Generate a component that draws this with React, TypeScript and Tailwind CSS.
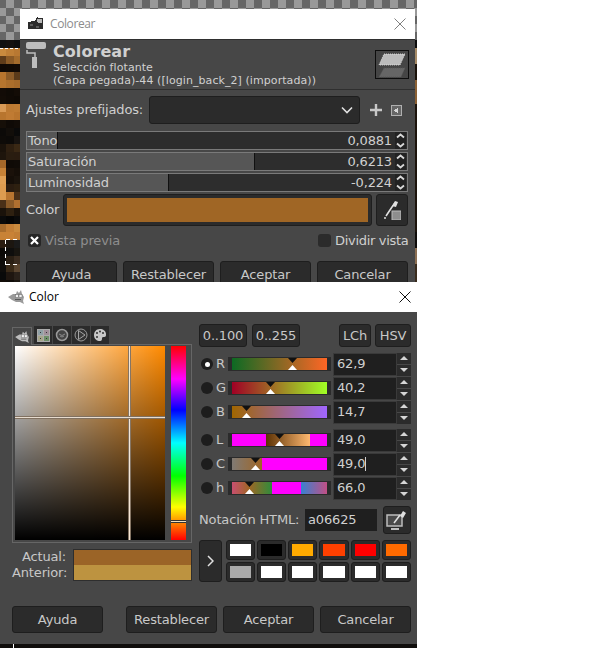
import React from "react";

const DARK = "bg-[#2b2b2b] border border-[#1e1e1e] rounded-[3px]";

// background picture, one row of 3 big pixels per 8px
const PIXELS: string[][] = [
	["#111111", "#151210", "#0f0f0f"],
	["#c98a3e", "#bf7f36", "#b87832"],
	["#5f3c1a", "#8b5a26", "#a56c2c"],
	["#0f0804", "#100904", "#120a05"],
	["#b8752e", "#8d5c28", "#5a3a1a"],
	["#b5752e", "#ab6e2b", "#a56a2a"],
	["#120b06", "#0f0a05", "#130c06"],
	["#130c06", "#100a05", "#0e0904"],
	["#d99a55", "#bd7a32", "#bf7c33"],
	["#b8752e", "#c07b33", "#b9752e"],
	["#160f08", "#0f0a06", "#120c07"],
	["#0c0a08", "#120e0a", "#0a0a0a"],
	["#0e0b08", "#0c0a08", "#171310"],
	["#1a120a", "#2e1f10", "#3a2814"],
	["#1e150c", "#2a1d10", "#2a1c10"],
	["#a5682a", "#0f0a06", "#100b07"],
	["#c78237", "#1a110a", "#150e08"],
	["#e0a055", "#150e08", "#1a130c"],
	["#dd9c50", "#2a1c10", "#2e2010"],
	["#dd9c50", "#b87530", "#4a3018"],
	["#4a3018", "#8a5a28", "#b07030"],
	["#1a120a", "#2e2010", "#1a120a"],
	["#0a0a0a", "#050505", "#0a0a0a"],
	["#a86c2c", "#c27e35", "#c98a3e"],
	["#c88236", "#c98236", "#c27e35"],
	["#2a1c10", "#1c1610", "#1a1a1a"],
	["#0c0a08", "#0f0e0d", "#181510"],
	["#0f0d0b", "#2a1f14", "#3a2c20"],
	["#0f0d0b", "#3a2a18", "#5a4530"],
	["#0a0a0a", "#1f1610", "#2a211a"],
	["#120d08", "#0f0c08", "#1a1510"],
];

const SIDE: [number, number, string][] = [
	[40, 8, "#0c0c0c"],
	[48, 16, "#a58a66"],
	[64, 16, "#1a120a"],
	[80, 24, "#8a6034"],
	[104, 128, "#1c140c"],
	[232, 16, "#0e0c0a"],
	[248, 16, "#8a6e52"],
	[264, 18, "#3a2c1e"],
];

function Backdrop() {
	const checks = [];
	for (let r = 0; r < 5; r++) {
		for (let c = 0; c < 54; c++) {
			checks.push(
				<rect key={r + "-" + c} x={-2 + c * 8} y={r * 8} width={8} height={8} fill={(r + c) % 2 ? "#999999" : "#666666"} />
			);
		}
	}
	return (
		<svg className="absolute inset-0" width="417" height="282" shapeRendering="crispEdges">
			<rect width="417" height="282" fill="#0c0a08" />
			{checks}
			{PIXELS.map((row, i) =>
				row.map((fill, j) => (
					<rect key={i + "_" + j} x={[0, 6, 14][j]} y={40 + i * 8} width={[6, 8, 6][j]} height={8} fill={fill} />
				))
			)}
			{SIDE.map(([y, h, fill]) => (
				<rect key={y} x={415} y={y} width={2} height={h} fill={fill} />
			))}
			<path d="M0 48H20" stroke="#fff" strokeDasharray="3 2" />
			<path d="M5.5 239.5H20M5.5 239.5V264.5M5.5 264.5H20" stroke="#fff" strokeDasharray="4 3" fill="none" />
		</svg>
	);
}

function Wilber({ className = "", fill = "#9a9a9a" }: { className?: string; fill?: string }) {
	return (
		<svg viewBox="0 0 16 14" className={className}>
			<path d="M0 7l5-3h3l1-3 2 2 2-3 1 4 2 3-1 4 1 3-4-2H8l-4-2z" fill={fill} />
			<rect x="7.500" y="4.500" width="3" height="3" fill="#f2f2f2" stroke="#666" strokeWidth="0.500" />
			<rect x="11" y="4.500" width="3" height="3" fill="#f2f2f2" stroke="#666" strokeWidth="0.500" />
			<path d="M7 9.500h6" stroke="#5a5a5a" />
		</svg>
	);
}

function CloseX({ color }: { color: string }) {
	return (
		<svg width="12" height="12" viewBox="0 0 12 12">
			<path d="M0.5 0.5l11 11M11.5 0.5l-11 11" stroke={color} />
		</svg>
	);
}

function Btn({ children, className = "" }: { children: React.ReactNode; className?: string }) {
	return (
		<div className={"flex items-center justify-center text-[#c8c8c8] " + DARK + " " + className}>
			{children}
		</div>
	);
}

function SpinArrows() {
	return (
		<svg width="11" height="17" viewBox="0 0 11 17" className="bg-[#222222]">
			<path d="M2 5.500l3.500-3 3.500 3M2 11.500l3.500 3 3.500-3" stroke="#d8d8d8" strokeWidth="1.800" fill="none" />
		</svg>
	);
}

function ScaleRow({ label, value, pos }: { label: string; value: string; pos: number }) {
	return (
		<div className="relative flex h-[19px] items-center justify-between border border-[#7a7a7a] bg-[#2d2d2d] pl-[1px] pr-[1px]">
			<div className="absolute inset-y-0 left-0 border-r border-[#111] bg-[#565656]" style={{ width: pos }} />
			<span className="relative text-[#d0d0d0]">{label}</span>
			<span className="relative flex items-center gap-[3px] text-[#d0d0d0]">
				{value}
				<SpinArrows />
			</span>
		</div>
	);
}

function Colorear() {
	return (
		<div className="relative ml-[20px] mt-[9px] w-[395px]">
			<div className="flex h-[30px] items-center justify-between bg-white pl-[8px] pr-[9px] font-['Open_Sans',sans-serif] text-[12px] text-[#8c8c8c]">
				<div className="flex items-center gap-[6px]">
					<svg width="16" height="14" viewBox="0 0 16 14" shapeRendering="crispEdges">
						<path d="M0 5l6-1 2-2 1-2 1 1h3l1-1 1 2v10H0z" fill="#2b2b2b" />
						<path d="M9 2h5v4h-3l-2-1z" fill="#b9b9b9" />
						<path d="M2 7h3v2H2zM8 9h3v2H8z" fill="#5d5d5d" />
					</svg>
					<span className="tracking-[-0.4px]">Colorear</span>
				</div>
				<CloseX color="#7f7f7f" />
			</div>

			<div className="h-[243px] bg-[#474747] font-['DejaVu_Sans',sans-serif] text-[13px] tracking-[-0.15px]">
				<div className="flex h-[51px] items-start border-y border-[#2f2f2f] px-[6px]">
					<svg width="20" height="26" viewBox="0 0 20 26" className="mt-[2px] shrink-0">
						<path d="M0 2q0-2 2-2h16q2 0 2 2v3q0 2-2 2H2q-2 0-2-2z" fill="#bdbdbd" />
						<path d="M1 8v3h8v5" stroke="#bdbdbd" strokeWidth="1.500" fill="none" />
						<rect x="6" y="15" width="5" height="11" fill="#bdbdbd" />
					</svg>
					<div className="ml-[7px] flex-1 pt-[2px] tracking-[0.07px] text-[#d0d0d0]">
						<div className="text-[16px] font-bold leading-[19px]">Colorear</div>
						<div className="text-[11px] leading-[13px]">Selección flotante</div>
						<div className="text-[11px] leading-[13px]">(Capa pegada)-44 ([login_back_2] (importada))</div>
					</div>
					<div className="mt-[10px] h-[29px] w-[34px] shrink-0 border border-[#0d0d0d] bg-[#454545]">
						<svg width="32" height="27" viewBox="0 0 32 27">
							<path d="M8 3h21l-5 11H3z" fill="#bcbcbc" stroke="#e8e8e8" strokeDasharray="1 1" strokeWidth="0.800" />
							<path d="M8 17h21l-4 9H3z" fill="#666666" stroke="#555555" strokeDasharray="1 1" strokeWidth="0.800" />
						</svg>
					</div>
				</div>

				<div className="pl-[6px] pr-[7px]">
					<div className="mt-[6px] flex h-[28px] items-center text-[#d0d0d0]">
						<span className="w-[117px] whitespace-nowrap">Ajustes prefijados:</span>
						<div className={"ml-[6px] flex h-full w-[211px] items-center justify-end pr-[6px] " + DARK}>
							<svg width="12" height="8" viewBox="0 0 12 8">
								<path d="M1 1.500l5 5 5-5" stroke="#e0e0e0" strokeWidth="1.600" fill="none" />
							</svg>
						</div>
						<svg width="12" height="12" viewBox="0 0 12 12" className="ml-[10px]">
							<path d="M6 0v12M0 6h12" stroke="#c8c8c8" strokeWidth="2.400" />
						</svg>
						<svg width="11" height="11" viewBox="0 0 11 11" className="ml-[9px]" shapeRendering="crispEdges">
							<rect x="0.500" y="0.500" width="10" height="10" fill="#666" stroke="#b0b0b0" />
							<path d="M7 2.500v6L3 5.500z" fill="#d5d5d5" />
						</svg>
					</div>

					<div className="mt-[7px] flex flex-col gap-[2px]">
						<ScaleRow label="Tono" value="0,0881" pos={31} />
						<ScaleRow label="Saturación" value="0,6213" pos={228} />
						<ScaleRow label="Luminosidad" value="-0,224" pos={142} />
					</div>

					<div className="mt-[2px] flex h-[32px] items-center text-[#d0d0d0]">
						<span className="w-[33px]">Color</span>
						<div className={"ml-[4px] h-full w-[309px] p-[3px] " + DARK}>
							<div className="h-full w-full bg-[#a06625]" />
						</div>
						<Btn className="ml-[4px] h-full w-[32px]">
							<svg width="18" height="20" viewBox="0 0 18 20">
								<path d="M3 16l6-9M9 7l3-4" stroke="#e0e0e0" strokeWidth="1.600" />
								<path d="M9 6l3-5 3 1-2 5z" fill="#e0e0e0" />
								<circle cx="2" cy="18" r="1" fill="#e0e0e0" />
								<rect x="9" y="11" width="9" height="9" fill="#8e8e8e" stroke="#bbb" />
							</svg>
						</Btn>
					</div>

					<div className="mt-[8px] flex h-[13px] items-center">
						<div className="ml-[2px] flex h-[13px] w-[13px] items-center justify-center rounded-[3px] bg-[#262626]">
							<svg width="9" height="9" viewBox="0 0 9 9">
								<path d="M1 1l7 7M8 1l-7 7" stroke="#fff" strokeWidth="2.200" />
							</svg>
						</div>
						<span className="ml-[4px] text-[#8e8e8e]">Vista previa</span>
						<div className="ml-auto h-[13px] w-[13px] rounded-[3px] bg-[#2b2b2b]" />
						<span className="ml-[4px] w-[73px] whitespace-nowrap tracking-[-0.3px] text-[#d0d0d0]">Dividir vista</span>
					</div>

					<div className="mt-[14px] flex h-[21px] gap-[6px] overflow-hidden">
						{["Ayuda", "Restablecer", "Aceptar", "Cancelar"].map((t) => (
							<Btn key={t} className="h-[27px] w-[91px] shrink-0 pb-[5px]">
								<span className="mt-[6px]">{t}</span>
							</Btn>
						))}
					</div>
				</div>
			</div>
		</div>
	);
}

function Tabs() {
	return (
		<div className="mt-[2px] flex h-[18px] items-end">
			<div className="relative top-[1px] z-10 flex h-[18px] w-[20px] items-center justify-center border border-b-0 border-[#666] bg-[#474747]">
				<Wilber className="h-[12px] w-[14px]" fill="#bdbdbd" />
			</div>
			<div className="ml-[2px] flex h-[18px] items-center gap-[1px]">
				<div className="flex h-[18px] w-[18px] items-center justify-center bg-[#2b2b2b]">
					<svg width="13" height="13" viewBox="0 0 13 13" shapeRendering="crispEdges">
						<rect width="13" height="13" fill="#ababab" />
						<rect x="1" y="1" width="5" height="5" fill="#8fa0a6" />
						<rect x="7" y="1" width="5" height="5" fill="#a08f9a" />
						<rect x="1" y="7" width="5" height="5" fill="#a6a68a" />
						<rect x="7" y="7" width="5" height="5" fill="#6f8f68" />
						<path d="M3 3h1v1H3zM9 3h1v1H9zM3 9h1v1H3zM9 9h1v1H9z" fill="#333" />
					</svg>
				</div>
				<div className="flex h-[18px] w-[18px] items-center justify-center bg-[#2b2b2b]">
					<svg width="14" height="14" viewBox="0 0 14 14">
						<circle cx="7" cy="7" r="5.500" fill="#444" stroke="#9a9a9a" strokeWidth="1.500" />
						<path d="M4 6q3 3 6 0M5 8l2 1 2-1" stroke="#8a8a8a" fill="none" />
					</svg>
				</div>
				<div className="flex h-[18px] w-[18px] items-center justify-center bg-[#2b2b2b]">
					<svg width="14" height="14" viewBox="0 0 14 14">
						<circle cx="7" cy="7" r="6" fill="#333" stroke="#9a9a9a" />
						<path d="M4.500 2.500L11 7l-6.500 4.500z" fill="#3a3a3a" stroke="#a5a5a5" />
					</svg>
				</div>
				<div className="flex h-[18px] w-[18px] items-center justify-center bg-[#2b2b2b]">
					<svg width="14" height="14" viewBox="0 0 14 14">
						<path d="M7 1C3 1 1 4 1 7c0 4 3 6 6 6 2 0 2-1.500 2-3 0-1 1-1 2-1 2 0 2-1 2-3 0-3-3-5-6-5z" fill="#c8c8c8" />
						<circle cx="4" cy="5" r="1" fill="#333" />
						<circle cx="7" cy="3.500" r="1" fill="#333" />
						<circle cx="10" cy="5" r="1" fill="#333" />
						<circle cx="4" cy="9" r="1" fill="#333" />
					</svg>
				</div>
			</div>
		</div>
	);
}

function Selector() {
	return (
		<div className="flex h-[199px] border border-[#666] px-[2px] pt-[1px]">
			<div className="relative h-[194px] w-[150px] bg-[#ff8a00]">
				<div className="absolute inset-0 bg-gradient-to-r from-white to-transparent" />
				<div className="absolute inset-0 bg-gradient-to-b from-transparent to-black" />
				<div className="absolute inset-y-0 left-[113px] w-[3px] border-x border-[#3a2a18]/60 bg-[#f5e6d6]" />
				<div className="absolute inset-x-0 top-[70px] h-[3px] border-y border-[#3a2a18]/60 bg-[#e8dccf]" />
			</div>
			<div className="relative ml-[6px] h-[194px] w-[15px] bg-[linear-gradient(180deg,#ff0000_0%,#ff00ff_17%,#0000ff_33%,#00ffff_50%,#00ff00_67%,#ffff00_83%,#ff0000_100%)]">
				<div className="absolute inset-x-0 top-[174px] h-[3px] border-y border-[#333] bg-[#f0e0c0]" />
			</div>
		</div>
	);
}

type Chan = { name: string; val: string; at: number; track: string; on?: boolean; caret?: boolean };

const RGB: Chan[] = [
	{ name: "R", val: "62,9", at: 62.9, track: "bg-[linear-gradient(90deg,#0c6a23,#ff6625)]", on: true },
	{ name: "G", val: "40,2", at: 40.2, track: "bg-[linear-gradient(90deg,#a00025,#a0ff25)]" },
	{ name: "B", val: "14,7", at: 14.7, track: "bg-[linear-gradient(90deg,#a06600,#a066ff)]" },
];

const LCH: Chan[] = [
	{ name: "L", val: "49,0", at: 49, track: "bg-[linear-gradient(90deg,#ff00ff_36%,#5c3204_36%,#ffb870_82%,#ff00ff_82%)]" },
	{ name: "C", val: "49,0", at: 24, caret: true, track: "bg-[linear-gradient(90deg,#807a74,#a06625_32%,#ff00ff_32%)]" },
	{ name: "h", val: "66,0", at: 18, track: "bg-[linear-gradient(90deg,#c84f70,#a06625_18%,#2f8c3c_42%,#ff00ff_42%,#ff00ff_73%,#3a80d0_73%,#c24f85)]" },
];

function ChanRow({ c }: { c: Chan }) {
	return (
		<div className="flex h-[24px] items-center">
			<div className="ml-[2px] flex h-[12px] w-[12px] items-center justify-center rounded-full bg-[#1d1d1d]">
				{c.on && <div className="h-[5px] w-[5px] rounded-full bg-white" />}
			</div>
			<span className="ml-[3px] w-[12px] text-[#c8c8c8]">{c.name}</span>
			<div className="h-[14px] w-[103px] bg-[#2b2b2b] px-[4px] py-[1px]">
				<div className={"relative h-full w-full " + c.track}>
					<svg width="11" height="12" viewBox="0 0 11 12" className="absolute top-0 -ml-[5px]" style={{ left: c.at + "%" }}>
						<path d="M1 0h9L5.500 5z" fill="#111" />
						<path d="M5.500 7L10 12H1z" fill="#fff" />
					</svg>
				</div>
			</div>
			<div className="ml-[2px] flex h-[23px] w-[64px] items-center border border-[#3a3a3a] bg-[#1f1f1f] pl-[3px] text-[#d0d0d0]">
				{c.val}
				{c.caret && <span className="h-[14px] w-[1px] bg-[#d0d0d0]" />}
			</div>
			<div className="flex h-[23px] w-[14px] flex-col gap-[1px] bg-[#474747]">
				<div className="flex h-[11px] items-center justify-center bg-[#2b2b2b]">
					<div className="h-0 w-0 border-x-[4px] border-b-[4px] border-x-transparent border-b-[#d5d5d5]" />
				</div>
				<div className="flex h-[11px] items-center justify-center bg-[#2b2b2b]">
					<div className="h-0 w-0 border-x-[4px] border-t-[4px] border-x-transparent border-t-[#d5d5d5]" />
				</div>
			</div>
		</div>
	);
}

const SWATCHES = ["#ffffff", "#000000", "#ffaa00", "#ff4000", "#ff0000", "#ff6a00", "#aaaaaa", "#ffffff", "#ffffff", "#ffffff", "#ffffff", "#ffffff"];

function ColorDialog() {
	return (
		<div>
			<div className="flex h-[30px] items-center justify-between bg-white pl-[8px] pr-[3px] font-['Open_Sans',sans-serif] text-[12px] text-black">
				<div className="flex items-center gap-[5px]">
					<Wilber className="h-[14px] w-[16px]" />
					Color
				</div>
				<div className="mr-[3px]"><CloseX color="#111" /></div>
			</div>
			<div className="h-[332px] bg-[#474747] pl-[12px] pt-[12px] font-['DejaVu_Sans',sans-serif] text-[13px] tracking-[-0.15px] text-[#c8c8c8]">
				<div className="flex">
					<div className="w-[180px]">
						<Tabs />
						<Selector />
						<div className="mt-[6px] flex h-[32px]">
							<div className="w-[54px] text-right leading-[16px]">
								<div>Actual:</div>
								<div>Anterior:</div>
							</div>
							<div className="ml-[7px] flex w-[120px] flex-col border border-[#2e2e2e]">
								<div className="h-1/2 bg-[#9b6427]" />
								<div className="h-1/2 bg-[#bd9340]" />
							</div>
						</div>
					</div>

					<div className="ml-[7px] w-[212px]">
						<div className="flex h-[23px] gap-[5px]">
							<Btn className="w-[48px] text-[#a8a8a8]">0..100</Btn>
							<Btn className="w-[48px]">0..255</Btn>
							<Btn className="ml-auto w-[32px] text-[#a8a8a8]">LCh</Btn>
							<Btn className="-ml-[1px] w-[36px]">HSV</Btn>
						</div>
						<div className="mt-[5px]">
							{RGB.map((c) => <ChanRow key={c.name} c={c} />)}
						</div>
						<div className="mt-[4px]">
							{LCH.map((c) => <ChanRow key={c.name} c={c} />)}
						</div>
						<div className="mt-[6px] flex h-[28px] items-center">
							<span className="w-[100px] whitespace-nowrap">Notación HTML:</span>
							<div className="ml-[6px] flex h-[22px] w-[72px] items-center bg-[#1f1f1f] pl-[3px] text-[#d0d0d0]">a06625</div>
							<Btn className="ml-auto h-[28px] w-[28px]">
								<svg width="22" height="20" viewBox="0 0 22 20">
									<rect x="1" y="5" width="15" height="11" fill="#4a4a4a" stroke="#bdbdbd" strokeWidth="1.500" />
									<path d="M5 19h8" stroke="#bdbdbd" strokeWidth="2" />
									<path d="M8 13l6-8" stroke="#e0e0e0" strokeWidth="1.500" />
									<path d="M14 6l3-5 3 2-3 5z" fill="#e0e0e0" />
								</svg>
							</Btn>
						</div>
						<div className="mt-[6px] flex h-[42px] gap-[4px]">
							<Btn className="w-[23px] shrink-0">
								<svg width="7" height="12" viewBox="0 0 7 12">
									<path d="M1 1l5 5-5 5" stroke="#e0e0e0" strokeWidth="1.500" fill="none" />
								</svg>
							</Btn>
							<div className="grid flex-1 grid-cols-6 gap-[2px]">
								{SWATCHES.map((s, i) => (
									<div key={i} className={"p-[3px] " + DARK}>
										<div className="h-full w-full" style={{ background: s }} />
									</div>
								))}
							</div>
						</div>
					</div>
				</div>

				<div className="mt-[24px] flex h-[27px] gap-[6px]">
					<Btn className="mr-[17px] w-[91px]">Ayuda</Btn>
					<Btn className="w-[91px]">Restablecer</Btn>
					<Btn className="w-[91px]">Aceptar</Btn>
					<Btn className="w-[91px]">Cancelar</Btn>
				</div>
			</div>
			<div className="relative h-[4px] bg-[#0f0d0b]">
				<div className="absolute left-[13px] top-0 h-[4px] w-[1px] bg-white" />
			</div>
		</div>
	);
}

export default function App() {
	return (
		<div className="h-[648px] w-[600px] overflow-hidden bg-white">
			<div className="w-[417px]">
				<div className="relative h-[282px] overflow-hidden">
					<Backdrop />
					<Colorear />
				</div>
				<ColorDialog />
			</div>
		</div>
	);
}
